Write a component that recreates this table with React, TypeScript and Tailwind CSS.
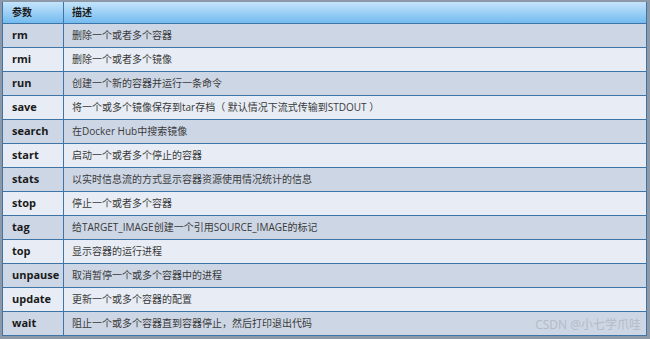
const rows: [string, string][] = [
  ['rm', '删除一个或者多个容器'],
  ['rmi', '删除一个或者多个镜像'],
  ['run', '创建一个新的容器并运行一条命令'],
  ['save', '将一个或多个镜像保存到tar存档（ 默认情况下流式传输到STDOUT ）'],
  ['search', '在Docker Hub中搜索镜像'],
  ['start', '启动一个或者多个停止的容器'],
  ['stats', '以实时信息流的方式显示容器资源使用情况统计的信息'],
  ['stop', '停止一个或者多个容器'],
  ['tag', '给TARGET_IMAGE创建一个引用SOURCE_IMAGE的标记'],
  ['top', '显示容器的运行进程'],
  ['unpause', '取消暂停一个或多个容器中的进程'],
  ['update', '更新一个或多个容器的配置'],
  ['wait', '阻止一个或多个容器直到容器停止，然后打印退出代码'],
];

const font = { fontFamily: '"Open Sans", "Noto Sans CJK SC", sans-serif' };

export default function App() {
  return (
    <div
      className="w-[650px] h-[339px] bg-[#8d99a6] pt-[2px] pb-[3px] pl-[2px] pr-[3px] overflow-hidden"
      style={font}
    >
      <div className="relative w-[645px] border-x border-b border-[#3f74a6]">
        <div className="flex h-[21px] bg-gradient-to-b from-[#c4e4fb] to-[#72bbef] items-center text-[10px] font-bold text-[#1b1b1b]">
          <div className="w-[61px] pl-[9px] border-r border-[#3f74a6] h-full flex items-center">参数</div>
          <div className="pl-[8px]">描述</div>
        </div>
        {rows.map(([name, desc], i) => (
          <div
            key={name}
            className={`flex h-[24px] border-t border-[#3f74a6] ${
              i % 2 === 0 ? 'bg-[#cdd6e5]' : 'bg-[#e8edf5]'
            }`}
          >
            <div className="w-[61px] pl-[9px] border-r border-[#3f74a6] flex items-center text-[11px] font-bold text-[#1a1a1a]">
              {name}
            </div>
            <div className="pl-[8px] flex items-center text-[10px] text-[#3a3a3a] whitespace-nowrap">
              {desc}
            </div>
          </div>
        ))}
        <div className="absolute right-[5px] bottom-[4px] text-[12px] leading-none text-[#b3bac5]">
          CSDN @小七学爪哇
        </div>
      </div>
    </div>
  );
}
